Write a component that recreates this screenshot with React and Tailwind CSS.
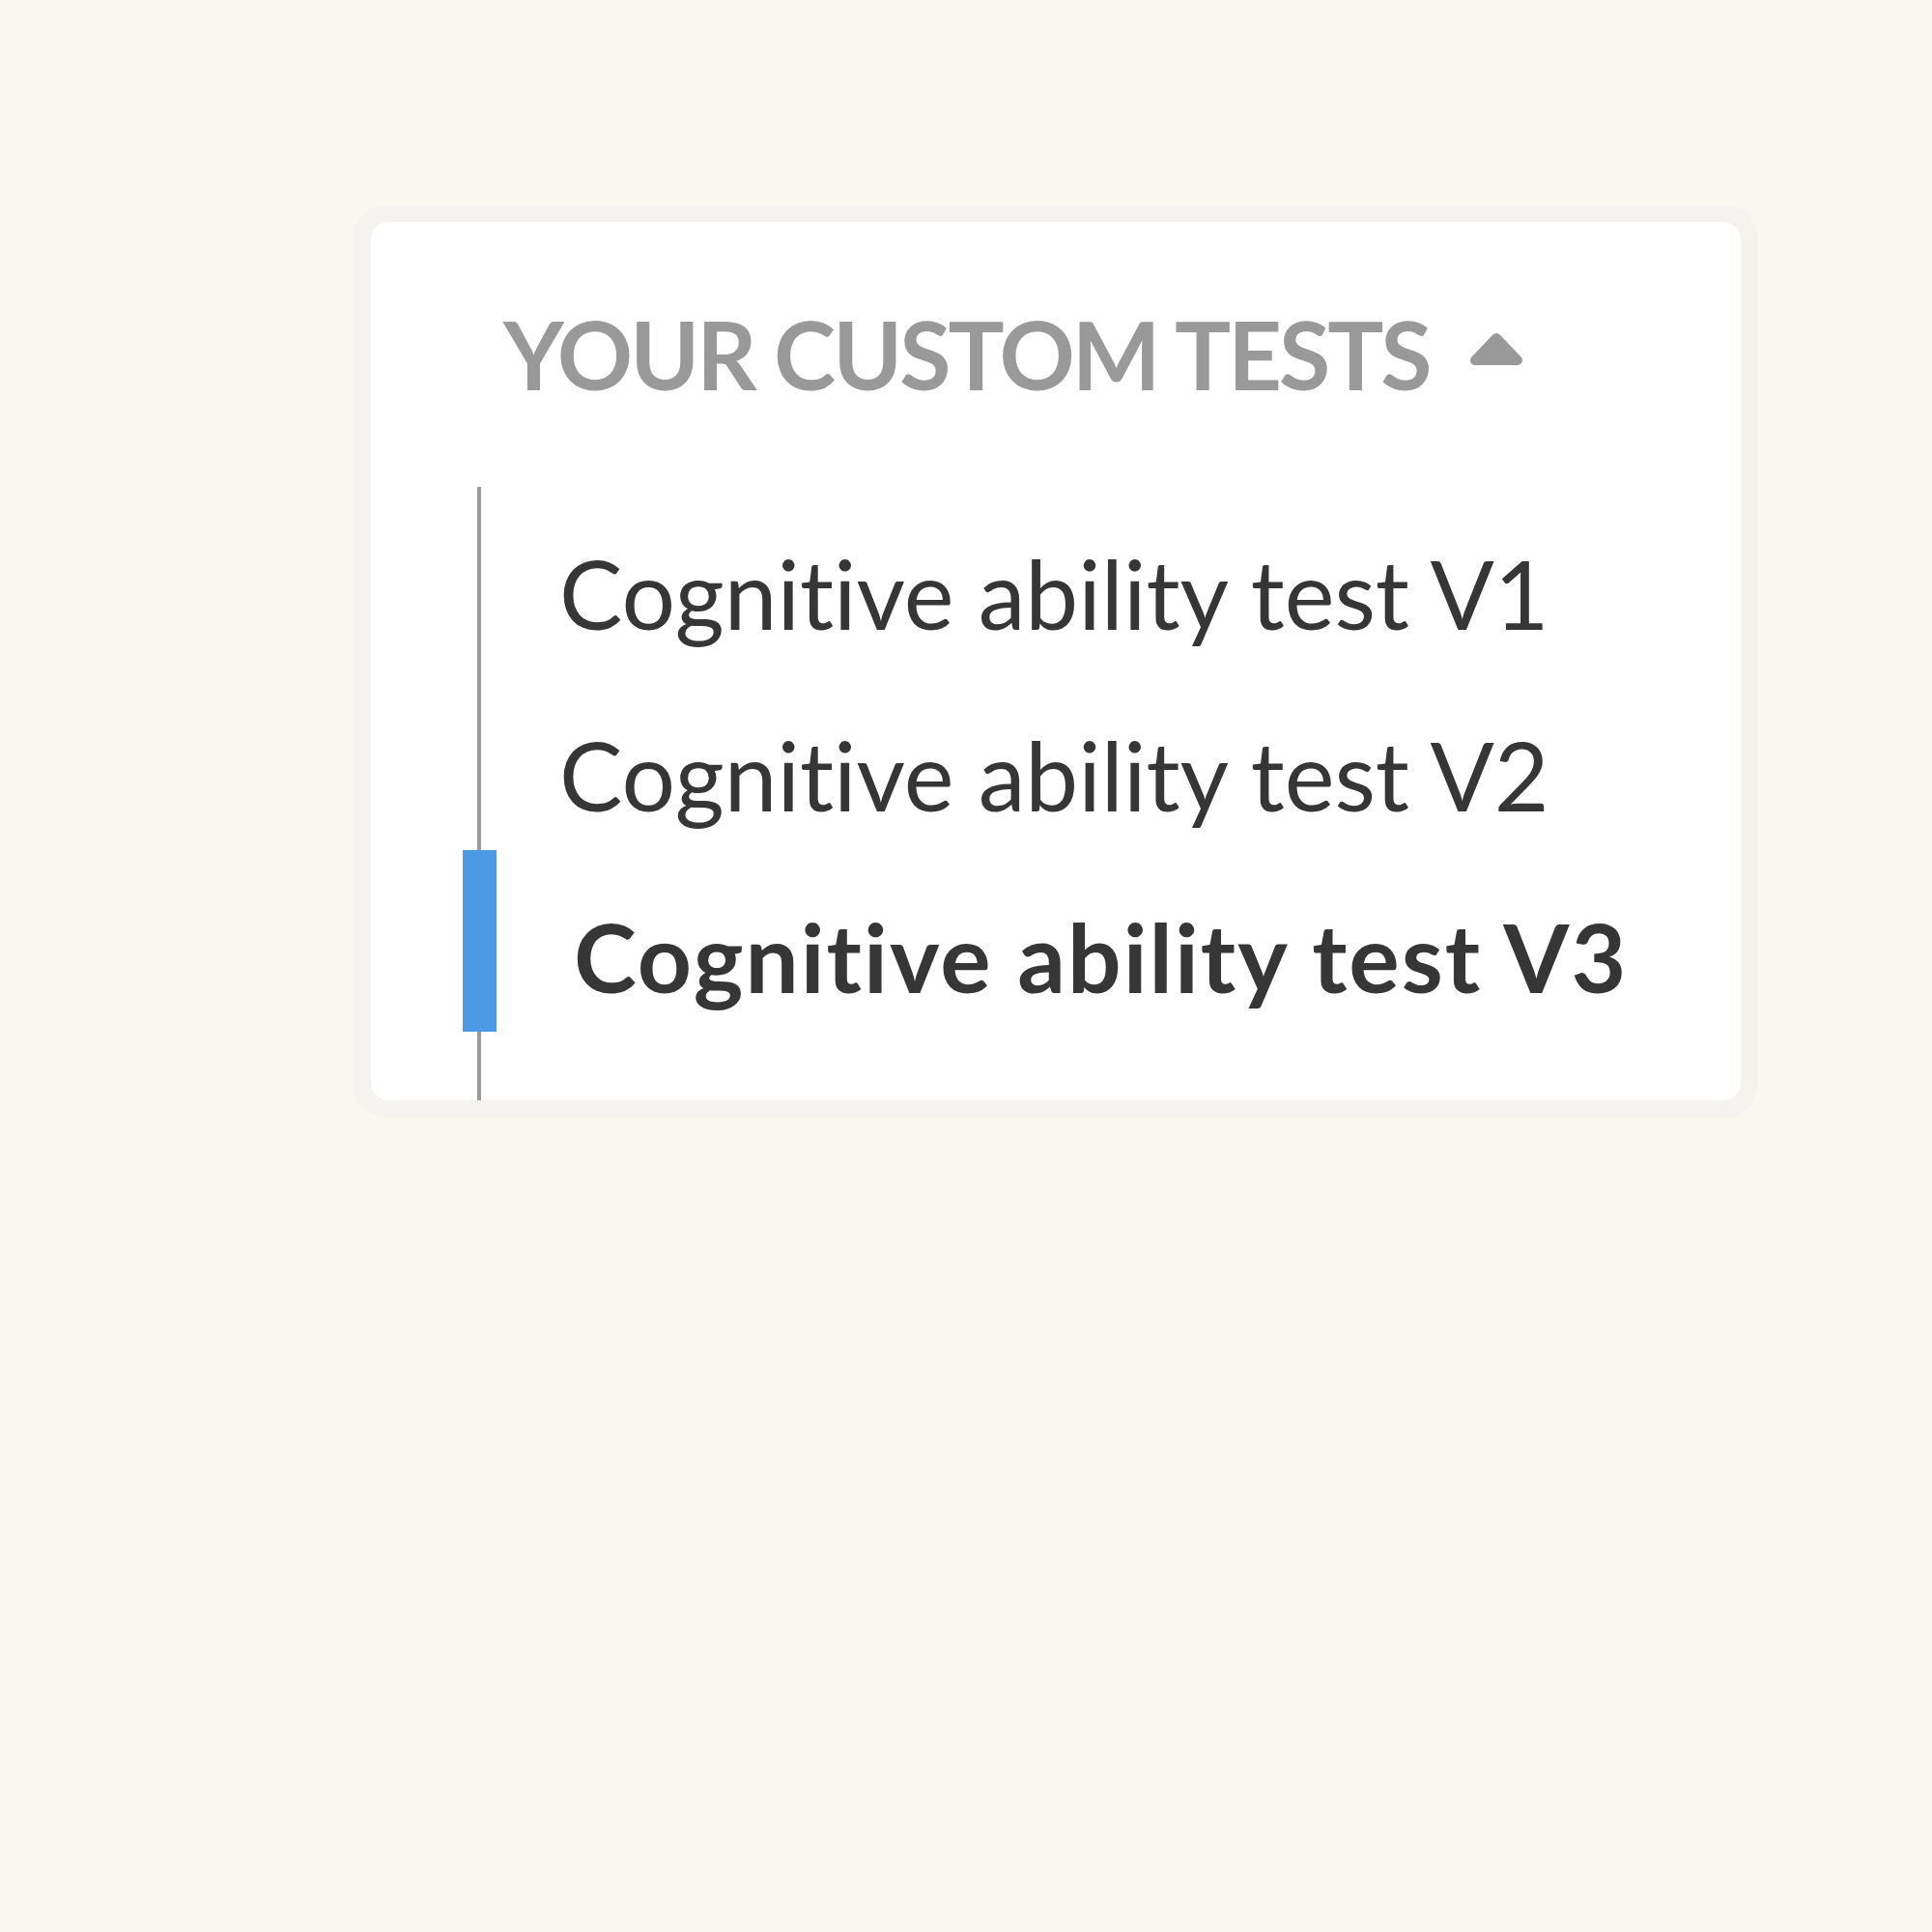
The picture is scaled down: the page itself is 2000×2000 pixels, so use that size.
import React from "react";

const tests = [
  "Cognitive ability test V1",
  "Cognitive ability test V2",
  "Cognitive ability test V3",
];

function Caret() {
  return (
    <svg width="56" height="35" viewBox="0 0 56 35" className="ml-[42px] mb-[10px]">
      <polygon
        points="6,29 28,6 50,29"
        fill="#999999"
        stroke="#999999"
        strokeWidth="10"
        strokeLinejoin="round"
      />
    </svg>
  );
}

export default function App() {
  const active = 2;

  return (
    <div
      className="min-h-screen w-full bg-[#faf6f0] pt-[212px] pl-[366px] [font-variant-ligatures:none]"
      style={{ fontFamily: "Lato, 'Noto Sans', sans-serif" }}
    >
      <div className="w-[1454px] rounded-[34px] bg-[#f4f3ef] p-[18px]">
        <div className="h-[909px] rounded-[18px] bg-white overflow-hidden flex flex-col">
          <div className="flex items-center pl-[137px] pt-[88px]">
            <h2 className="text-[97px] leading-none font-bold uppercase tracking-[-3px] text-[#999999]">
              Your custom tests
            </h2>
            <Caret />
          </div>

          <div className="ml-[110px] mt-[89px] flex-1 border-l-4 border-[#999999]">
            {tests.map((t, i) => (
              <div key={t} className="relative h-[188px] pt-[61px]">
                {i === active && (
                  <span className="absolute left-[-19px] top-0 bottom-0 w-[35px] bg-[#4c9ae6]" />
                )}
                <div
                  className={
                    i === active
                      ? "pl-[96px] text-[98px] leading-none font-bold tracking-[2px] text-[#363636]"
                      : "pl-[81px] text-[98px] leading-none text-[#363636]"
                  }
                >
                  {t}
                </div>
              </div>
            ))}
          </div>
        </div>
      </div>
    </div>
  );
}
